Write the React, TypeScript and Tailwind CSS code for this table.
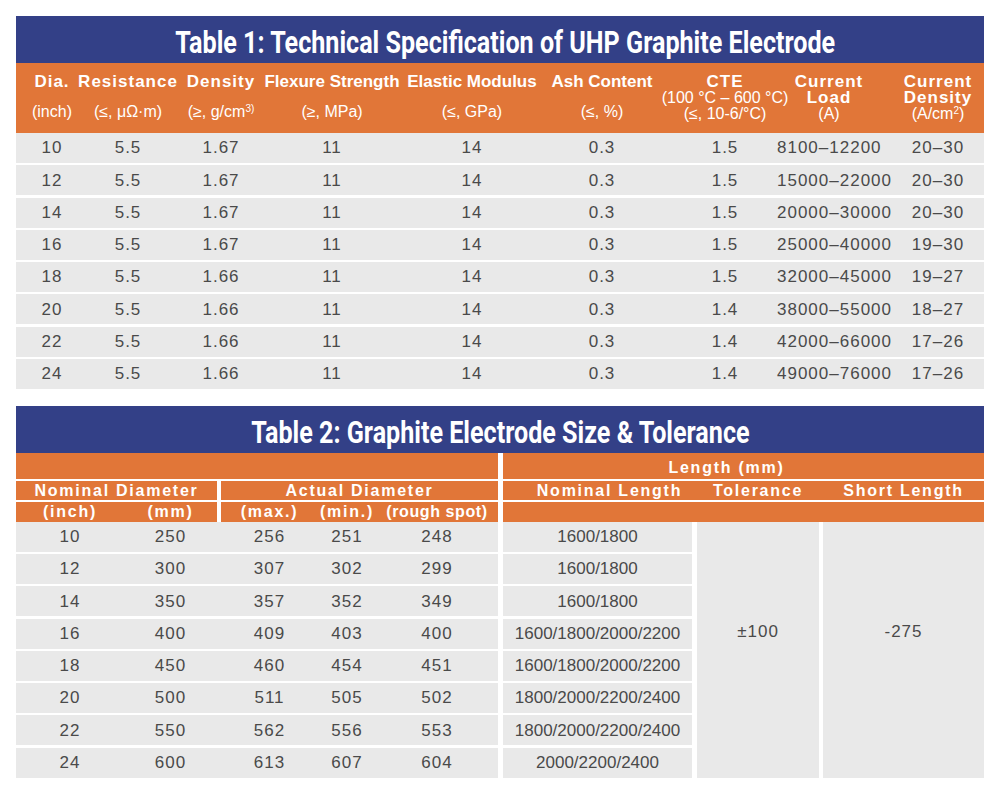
import React from "react";

const t1Rows = [
  ["10", "5.5", "1.67", "11", "14", "0.3", "1.5", "8100–12200", "20–30"],
  ["12", "5.5", "1.67", "11", "14", "0.3", "1.5", "15000–22000", "20–30"],
  ["14", "5.5", "1.67", "11", "14", "0.3", "1.5", "20000–30000", "20–30"],
  ["16", "5.5", "1.67", "11", "14", "0.3", "1.5", "25000–40000", "19–30"],
  ["18", "5.5", "1.66", "11", "14", "0.3", "1.5", "32000–45000", "19–27"],
  ["20", "5.5", "1.66", "11", "14", "0.3", "1.4", "38000–55000", "18–27"],
  ["22", "5.5", "1.66", "11", "14", "0.3", "1.4", "42000–66000", "17–26"],
  ["24", "5.5", "1.66", "11", "14", "0.3", "1.4", "49000–76000", "17–26"],
];

const t2Rows = [
  ["10", "250", "256", "251", "248", "1600/1800"],
  ["12", "300", "307", "302", "299", "1600/1800"],
  ["14", "350", "357", "352", "349", "1600/1800"],
  ["16", "400", "409", "403", "400", "1600/1800/2000/2200"],
  ["18", "450", "460", "454", "451", "1600/1800/2000/2200"],
  ["20", "500", "511", "505", "502", "1800/2000/2200/2400"],
  ["22", "550", "562", "556", "553", "1800/2000/2200/2400"],
  ["24", "600", "613", "607", "604", "2000/2200/2400"],
];

function HeadCell({
  label,
  unit,
  spaced,
  extra = "",
}: {
  label: React.ReactNode;
  unit: React.ReactNode;
  spaced: boolean;
  extra?: string;
}) {
  return (
    <div className={"flex flex-col items-center pt-[11px] whitespace-nowrap " + extra}>
      <div className={"text-[17px] font-bold leading-[16px] " + (spaced ? "tracking-[1px]" : "tracking-[0px]")}>{label}</div>
      <div className="mt-[14px] text-[16px] leading-[16px]">{unit}</div>
    </div>
  );
}

function Head3({ lines, extra = "" }: { lines: [React.ReactNode, boolean][]; extra?: string }) {
  return (
    <div className={"flex flex-col items-center pt-[11px] whitespace-nowrap " + extra}>
      {lines.map(([l, bold], i) => (
        <div
          key={i}
          className={bold ? "text-[17px] font-bold leading-[16px] tracking-[1px]" : "text-[16px] leading-[16px]"}
        >
          {l}
        </div>
      ))}
    </div>
  );
}

export default function App() {
  return (
    <div className="w-[999px] h-[794px] bg-white pt-[16px] pl-[16px] [font-family:'Liberation_Sans',Arial,sans-serif]">
      {/* Table 1 */}
      <div className="w-[968px]">
        <div className="h-[47px] bg-[#334087] flex items-center justify-center pt-[4px] overflow-hidden">
          <span className="inline-block scale-x-[0.785] translate-x-[5px] text-white text-[32px] leading-none font-bold whitespace-nowrap [font-family:Roboto,sans-serif]">
            Table 1: Technical Specification of UHP Graphite Electrode
          </span>
        </div>
        <div className="h-[70px] bg-[#e17638] grid grid-cols-[72px_80px_106px_116px_164px_96px_150px_92px_92px] text-white">
          <HeadCell label="Dia." unit="(inch)" spaced />
          <HeadCell label="Resistance" unit="(≤, μΩ·m)" spaced />
          <HeadCell
            label="Density"
            unit={
              <>
                (≥, g/cm<sup className="text-[10px]">3)</sup>
              </>
            }
            spaced
          />
          <HeadCell label="Flexure Strength" unit="(≥, MPa)" spaced={false} />
          <HeadCell label="Elastic Modulus" unit="(≤, GPa)" spaced={false} />
          <HeadCell label="Ash Content" unit="(≤, %)" spaced={false} />
          <Head3
            lines={[
              ["CTE", true],
              ["(100 °C – 600 °C)", false],
              ["(≤, 10-6/°C)", false],
            ]}
          />
          <Head3
            extra="pr-[34px]"
            lines={[
              ["Current", true],
              ["Load", true],
              ["(A)", false],
            ]}
          />
          <Head3
            lines={[
              ["Current", true],
              ["Density", true],
              [
                <>
                  (A/cm<sup className="text-[10px]">2</sup>)
                </>,
                false,
              ],
            ]}
          />
        </div>
        <div className="flex flex-col gap-[2.28px]">
          {t1Rows.map((r, i) => (
            <div
              key={i}
              className="h-[30px] bg-[#e9e9e9] grid grid-cols-[72px_80px_106px_116px_164px_96px_150px_92px_92px] items-center text-[17px] tracking-[1px] text-[#4a4a4a] whitespace-nowrap"
            >
              <div className="flex justify-center">{r[0]}</div>
              <div className="flex justify-center">{r[1]}</div>
              <div className="flex justify-center">{r[2]}</div>
              <div className="flex justify-center">{r[3]}</div>
              <div className="flex justify-center">{r[4]}</div>
              <div className="flex justify-center">{r[5]}</div>
              <div className="flex justify-center">{r[6]}</div>
              <div className="flex justify-start">
                <span className="ml-[-23px]">{r[7]}</span>
              </div>
              <div className="flex justify-center">{r[8]}</div>
            </div>
          ))}
        </div>
      </div>

      {/* Table 2 */}
      <div className="w-[968px] mt-[17px]">
        <div className="h-[47px] bg-[#334087] flex items-center justify-center pt-[5px] overflow-hidden">
          <span className="inline-block scale-x-[0.785] text-white text-[32px] leading-none font-bold whitespace-nowrap [font-family:Roboto,sans-serif]">
            Table 2: Graphite Electrode Size &amp; Tolerance
          </span>
        </div>
        <div className="flex gap-[5px] text-white text-[16px] font-bold tracking-[1.75px] whitespace-nowrap">
          <div className="w-[482px] flex flex-col gap-[2px]">
            <div className="h-[26px] bg-[#e17638]" />
            <div className="h-[19px] flex gap-[4px] leading-[19px]">
              <div className="w-[201px] bg-[#e17638] flex justify-center">Nominal Diameter</div>
              <div className="flex-1 bg-[#e17638] flex justify-center">Actual Diameter</div>
            </div>
            <div className="h-[20px] flex gap-[4px] leading-[20px]">
              <div className="w-[201px] bg-[#e17638] grid grid-cols-[108px_93px]">
                <div className="flex justify-center">(inch)</div>
                <div className="flex justify-center">(mm)</div>
              </div>
              <div className="flex-1 bg-[#e17638] grid grid-cols-[97px_58px_122px]">
                <div className="flex justify-center">(max.)</div>
                <div className="flex justify-center">(min.)</div>
                <div className="flex justify-center tracking-[0.6px]">(rough spot)</div>
              </div>
            </div>
          </div>
          <div className="w-[481px] flex flex-col gap-[2px]">
            <div className="h-[26px] bg-[#e17638] flex justify-center pr-[34px] pt-[5px] leading-[19px]">Length (mm)</div>
            <div className="h-[19px] bg-[#e17638] grid grid-cols-[189px_5px_122px_4px_161px] leading-[19px]">
              <div className="flex justify-center pl-[24px]">Nominal Length</div>
              <div />
              <div className="flex justify-center">Tolerance</div>
              <div />
              <div className="flex justify-center">Short Length</div>
            </div>
            <div className="h-[20px] bg-[#e17638]" />
          </div>
        </div>
        <div className="flex gap-[5px] text-[17px] text-[#4a4a4a] whitespace-nowrap">
          <div className="w-[482px] flex flex-col gap-[2.28px] tracking-[1px]">
            {t2Rows.map((r, i) => (
              <div
                key={i}
                className="h-[30px] bg-[#e9e9e9] grid grid-cols-[108px_93px_4px_97px_58px_122px] items-center"
              >
                <div className="flex justify-center">{r[0]}</div>
                <div className="flex justify-center">{r[1]}</div>
                <div />
                <div className="flex justify-center">{r[2]}</div>
                <div className="flex justify-center">{r[3]}</div>
                <div className="flex justify-center">{r[4]}</div>
              </div>
            ))}
          </div>
          <div className="w-[189px] flex flex-col gap-[2.28px]">
            {t2Rows.map((r, i) => (
              <div key={i} className="h-[30px] bg-[#e9e9e9] flex items-center justify-center">
                {r[5]}
              </div>
            ))}
          </div>
          <div className="w-[122px] bg-[#e9e9e9] pt-[100px] leading-[20px] text-center tracking-[1px]">±100</div>
          <div className="w-[161px] ml-[-1px] bg-[#e9e9e9] pt-[100px] leading-[20px] text-center tracking-[1px]">-275</div>
        </div>
      </div>
    </div>
  );
}
